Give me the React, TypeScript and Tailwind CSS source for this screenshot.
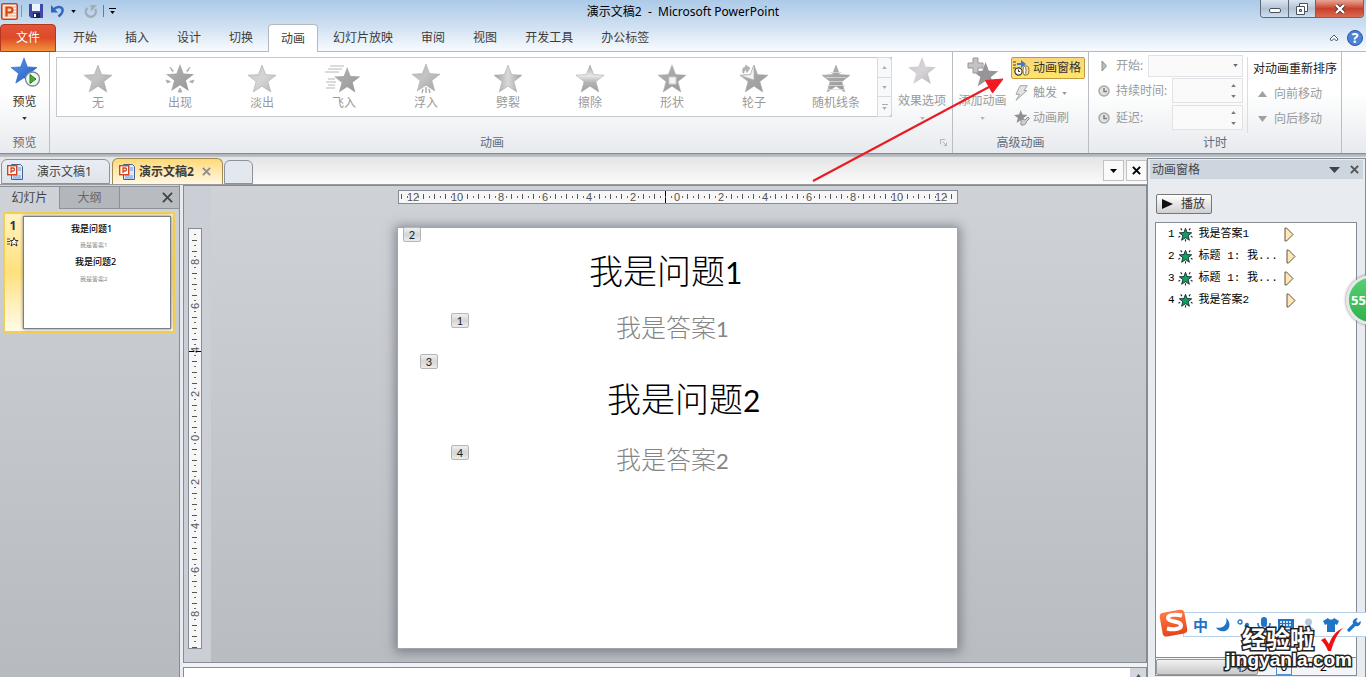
import type { ReactNode } from "react";

const STAR = "M14 0 L17.6 9.6 L28 10.2 L19.9 16.6 L22.8 27 L14 21.2 L5.2 27 L8.1 16.6 L0 10.2 L10.4 9.6 Z";

const menu = ["开始", "插入", "设计", "切换", "动画", "幻灯片放映", "审阅", "视图", "开发工具", "办公标签"];

const effects = [
  { name: "无", kind: "none" },
  { name: "出现", kind: "appear" },
  { name: "淡出", kind: "fade" },
  { name: "飞入", kind: "fly" },
  { name: "浮入", kind: "float" },
  { name: "劈裂", kind: "split" },
  { name: "擦除", kind: "wipe" },
  { name: "形状", kind: "shape" },
  { name: "轮子", kind: "wheel" },
  { name: "随机线条", kind: "bars" },
];

const timeline = [
  { id: 1, label: "我是答案1", shift: false },
  { id: 2, label: "标题 1: 我...", shift: true },
  { id: 3, label: "标题 1: 我...", shift: false },
  { id: 4, label: "我是答案2", shift: true },
];

function Caret({ className = "", up = false }: { className?: string; up?: boolean }) {
  return (
    <svg viewBox="0 0 6 4" className={`h-[3px] w-[5px] shrink-0 ${className}`}>
      <path d={up ? "M0 4 L3 0 L6 4 Z" : "M0 0 H6 L3 4 Z"} fill="currentColor" />
    </svg>
  );
}

function Defs() {
  return (
    <svg className="absolute size-0" aria-hidden="true">
      <defs>
        <linearGradient id="g-plain" x1="0" y1="0" x2="1" y2="1">
          <stop offset="0" stopColor="#b9b9b9" />
          <stop offset=".45" stopColor="#c4c4c4" />
          <stop offset="1" stopColor="#a2a2a2" />
        </linearGradient>
        <linearGradient id="g-dark" x1="0" y1="0" x2="1" y2="1">
          <stop offset="0" stopColor="#b4b2b4" />
          <stop offset="1" stopColor="#989698" />
        </linearGradient>
        <linearGradient id="g-light" x1="0" y1="0" x2="1" y2="1">
          <stop offset="0" stopColor="#c6c4c6" />
          <stop offset=".5" stopColor="#d6d4d6" />
          <stop offset="1" stopColor="#b8b6b8" />
        </linearGradient>
        <linearGradient id="g-split" x1="0" y1="0" x2="1" y2="0">
          <stop offset="0" stopColor="#a19fa1" />
          <stop offset=".5" stopColor="#dad9da" />
          <stop offset="1" stopColor="#a19fa1" />
        </linearGradient>
        <linearGradient id="g-wipe" x1="0" y1="0" x2="0" y2="1">
          <stop offset="0" stopColor="#a8a6a8" />
          <stop offset=".4" stopColor="#e8e8e8" />
          <stop offset=".65" stopColor="#b4b2b4" />
          <stop offset="1" stopColor="#a09ea0" />
        </linearGradient>
        <linearGradient id="g-blue" x1="0" y1="0" x2="1" y2="1">
          <stop offset="0" stopColor="#5b9bf0" />
          <stop offset="1" stopColor="#1f57bd" />
        </linearGradient>
        <linearGradient id="g-orange" x1="0" y1="0" x2="0" y2="1">
          <stop offset="0" stopColor="#ff7a45" />
          <stop offset="1" stopColor="#e6451b" />
        </linearGradient>
      </defs>
    </svg>
  );
}

function EffectIcon({ kind }: { kind: string }) {
  const fills: Record<string, string> = {
    none: "url(#g-plain)",
    fade: "url(#g-light)",
    split: "url(#g-split)",
    wipe: "url(#g-wipe)",
  };
  return (
    <svg viewBox="-6 -2 40 32" className="h-8 w-10">
      {kind === "float" ? (
        <path d={STAR} fill="url(#g-plain)" stroke="#b0aeb0" strokeWidth=".6" transform="translate(0 -1)" />
      ) : kind === "fly" || kind === "appear" ? (
        <path d={STAR} fill="url(#g-dark)" transform={kind === "fly" ? "translate(4 2) scale(.94)" : "translate(0 -1)"} />
      ) : (
        <path d={STAR} fill={fills[kind] ?? "url(#g-dark)"} stroke="#adabad" strokeWidth=".6" />
      )}
      {kind === "appear" && (
        <path d="M4 2l3.500 4-1 .8zM24 2l-3.500 4 1 .8zM0 15l4.500 1.500-3 1.500zM28 15l-4.500 1.500 3 1.500zM12 27l2-4 2 4z" fill="#a8a8a8" stroke="#b4b4b4" />
      )}
      {kind === "fly" && (
        <path d="M0 1h14M-2 4h14M-5 7h14M-2 14h7M-4 17h10M-2 20h7M-4 23h9" stroke="#b8b8b8" strokeWidth="1.2" />
      )}
      {kind === "float" && <path d="M11 24l-1 4M14 22v6M17 24l1 4" stroke="#a8a8a8" strokeWidth="1.4" />}
      {kind === "shape" && <path d="M11 12h7v7h-7z" fill="#f4f4f4" stroke="#cfcfcf" />}
      {kind === "wheel" && (
        <>
          <path d="M14 0v15L0 10.5l10.4-.9z" fill="#f5f5f5" stroke="#b0b0b0" strokeWidth=".7" />
          <path d="M3 8c-1-4 0-6 3-6l-.5-2L10 3 7 7.500 6 5C4.500 5 4 6 4 8z" fill="#b4b4b4" stroke="#999" strokeWidth=".5" />
        </>
      )}
      {kind === "bars" && (
        <path d="M8 7.5h12M4 12.500h20M7 16.500h14M5 20.500h18M5 24.500h18" stroke="#dcdcdc" strokeWidth=".8" />
      )}
    </svg>
  );
}

function PptIcon() {
  return (
    <svg viewBox="0 0 17 17" className="size-[17px] shrink-0">
      <rect x=".8" y=".8" width="15.4" height="15.4" rx="1.5" fill="#fff4ec" stroke="#cf3f17" strokeWidth="1.6" />
      <path d="M3 3h8v11H3z" fill="#fbd3bb" />
      <path d="M11 4h4M11 7h4M11 10h4M11 13h4" stroke="#f19a70" />
      <path d="M5.5 13.500V4.500H9a2.300 2.300 0 0 1 0 5H6" fill="none" stroke="#cf4a12" strokeWidth="2.200" />
    </svg>
  );
}

function DocIcon() {
  return (
    <svg viewBox="0 0 16 16" className="size-4 shrink-0">
      <path d="M4.500.5h9l2 2v13h-11z" fill="#dce9fb" stroke="#48658e" />
      <path d="M11 4h3M11 6h3M6 12h8M6 14h8" stroke="#6d9be0" />
      <rect x=".7" y="1.700" width="9" height="9" fill="#fff" stroke="#d1431a" strokeWidth="1.400" />
      <path d="M4 9V4h2a1.400 1.400 0 0 1 0 3H4" fill="none" stroke="#d1431a" strokeWidth="1.300" />
    </svg>
  );
}

function Cross({ className = "" }: { className?: string }) {
  return (
    <svg viewBox="0 0 10 10" className={`size-[9px] ${className}`}>
      <path d="M1 1l8 8M9 1L1 9" stroke="currentColor" strokeWidth="2.2" />
    </svg>
  );
}

function TitleBar() {
  return (
    <div className="relative flex h-6 items-start justify-between pl-px">
      <div className="flex h-[22px] items-center">
        <PptIcon />
        <span className="mx-[3px] h-3 w-px bg-[#8796a8]" />
        <button aria-label="保存" className="ml-1">
          <svg viewBox="0 0 14 14" className="size-[14px]">
            <path d="M0 0h14v14H2l-2-2z" fill="#3f4aa8" />
            <path d="M3 0h8v7H3z" fill="#eef4ff" />
            <path d="M4 9h7v5H4z" fill="#1d2250" />
            <path d="M5 10h2v3H5z" fill="#fff" />
          </svg>
        </button>
        <button aria-label="撤消" className="ml-2">
          <svg viewBox="0 0 14 14" className="size-[14px]">
            <path d="M2.500 5.500C7 1 12.500 3 11.500 7.500c-.4 2-2 3.500-4 5" fill="none" stroke="#2f68c4" strokeWidth="2.400" />
            <path d="M0 1v7.500h7z" fill="#2f68c4" />
          </svg>
        </button>
        <Caret className="ml-[6px] text-black" />
        <button aria-label="恢复" className="ml-2">
          <svg viewBox="0 0 14 14" className="size-[14px]">
            <path d="M3.500 4a5 5 0 1 0 7.500 1" fill="none" stroke="#a6acb2" strokeWidth="2.400" />
            <path d="M6.500 1H13L7 7.500z" fill="#a6acb2" />
          </svg>
        </button>
        <span className="mx-[5px] h-3 w-px bg-[#6d7b8c]" />
        <button aria-label="自定义快速访问工具栏" className="flex flex-col items-center gap-[2px]">
          <span className="h-px w-[7px] bg-black" />
          <Caret className="text-black" />
        </button>
      </div>
      <h1 className="absolute inset-x-0 top-0 text-center leading-6 whitespace-pre text-black">演示文稿2  -  Microsoft PowerPoint</h1>
      <div className="relative mr-[2px] flex h-[18px] overflow-hidden rounded-b border border-t-0 border-[#5c6a7b]">
        <button aria-label="最小化" className="grid w-7 place-items-center border-r border-[#5c6a7b] bg-linear-to-b from-[#dbe5f0] via-[#b3c3d5] to-[#d0dfee]">
          <span className="mt-1 h-[5px] w-3 rounded-xs border border-[#4a5260] bg-white" />
        </button>
        <button aria-label="还原" className="grid w-[27px] place-items-center border-r border-[#5c6a7b] bg-linear-to-b from-[#dbe5f0] via-[#b3c3d5] to-[#d0dfee]">
          <svg viewBox="0 0 12 12" className="size-3">
            <path d="M3.500.5h8v8h-8z" fill="#fff" stroke="#4a5260" />
            <path d="M.5 3.500h8v8h-8z" fill="#fff" stroke="#4a5260" />
            <path d="M3.500 6.500h2v2h-2z" fill="#b3c3d5" stroke="#4a5260" />
          </svg>
        </button>
        <button aria-label="关闭" className="grid w-[47px] place-items-center bg-linear-to-b from-[#e8a594] via-[#c8402a] to-[#d9694f]">
          <svg viewBox="0 0 12 10" className="h-[10px] w-3">
            <path d="M2 1l8 8M10 1L2 9" stroke="#4b3034" strokeWidth="4" />
            <path d="M2 1l8 8M10 1L2 9" stroke="#fff" strokeWidth="2.400" />
          </svg>
        </button>
      </div>
    </div>
  );
}

function MenuBar() {
  return (
    <nav className="flex h-7 items-stretch border-b border-[#b3b9c1] text-[#3b3b3b]">
      <a href="#file" className="mr-[3px] -mb-px flex w-14 items-center justify-center rounded-t border border-[#b5361a] bg-linear-to-b from-[#e2553a] via-[#dd4a26] to-[#f3903f] text-white">
        文件
      </a>
      {menu.map((m) => (
        <a
          key={m}
          href={`#${m}`}
          className={
            m === "动画"
              ? "mx-px -mb-px flex items-center rounded-t border border-b-0 border-[#b3b9c1] bg-white px-3"
              : "flex items-center px-[14px]"
          }
        >
          {m}
        </a>
      ))}
      <div className="ml-auto flex items-center gap-2 pr-[3px]">
        <button aria-label="功能区最小化">
          <svg viewBox="0 0 10 8" className="h-2 w-[10px]">
            <path d="M1 5l4-4 4 4-1.500 2L5 4.500 2.500 7z" fill="#fff" stroke="#4a5568" />
          </svg>
        </button>
        <button aria-label="帮助" className="size-4 rounded-full border border-[#2a56a5] bg-[#4b82d6] text-center text-sm leading-[14px] font-bold text-white">
          ?
        </button>
      </div>
    </nav>
  );
}

function Group({ title, className = "", children }: { title: string; className?: string; children: ReactNode }) {
  return (
    <section className={`relative flex flex-col border-r border-[#b9bec5] ${className}`}>
      <div className="flex min-h-0 flex-1 pt-[5px]">{children}</div>
      <h2 className="h-5 text-center leading-5 text-[#5f6b7c]">{title}</h2>
    </section>
  );
}

function Clock() {
  return (
    <svg viewBox="0 0 12 12" className="size-3 shrink-0">
      <circle cx="6" cy="6" r="5" fill="#e2e2e2" stroke="#a8a8a8" strokeWidth="1.500" />
      <path d="M6 3v3.500h3" fill="none" stroke="#7d7d7d" strokeWidth="1.500" />
    </svg>
  );
}

function Spinner({ id, label }: { id: string; label: string }) {
  return (
    <div className="flex h-[25px] items-center">
      <Clock />
      <label htmlFor={id} className="ml-[6px]">{label}</label>
      <div className="ml-auto flex h-full w-[71px] items-center border border-[#e0e2e6] bg-[#fafafa]">
        <input id={id} disabled className="h-full min-w-0 flex-1" />
        <div className="flex w-[17px] flex-col items-center gap-2 text-[#777]">
          <Caret up />
          <Caret />
        </div>
      </div>
    </div>
  );
}

function Ribbon() {
  return (
    <div className="flex h-[102px] border-b border-[#868c95] bg-linear-to-b from-white from-40% to-[#e7eaee] text-[#9a9a9a]">
      <Group title="预览" className="w-[50px] shrink-0">
        <button className="flex w-full flex-col items-center text-[#333]">
          <svg viewBox="0 0 30 32" className="h-8 w-[30px]">
            <path d={STAR} fill="url(#g-blue)" stroke="#2b62c0" strokeWidth=".7" transform="translate(1 1) scale(.93)" />
            <circle cx="22.500" cy="22" r="7" fill="#f3f7f4" stroke="#7b8b96" strokeWidth="1.300" />
            <path d="M20 17.500l6 4.500-6 4.500z" fill="#4ab02c" stroke="#2d7c1b" />
          </svg>
          <span className="mt-[3px] leading-5">预览</span>
          <Caret className="mt-[5px]" />
        </button>
      </Group>

      <Group title="动画" className="min-w-0 flex-1 pl-[6px] [&>h2]:pr-6">
        <div className="flex h-[60px] min-w-0 flex-1 border border-[#c5c9ce] bg-white">
          {effects.map((e) => (
            <button key={e.name} className="flex min-w-0 flex-1 flex-col items-center pt-[5px]">
              <EffectIcon kind={e.kind} />
              <span className="-mt-px leading-[18px] whitespace-nowrap">{e.name}</span>
            </button>
          ))}
          <div className="-my-px -mr-px flex w-[15px] flex-col divide-y divide-[#d8dade] rounded-r border border-[#d8dade] bg-[#f8f9fa] text-[#adadad]">
            <button aria-label="上一行" className="grid flex-1 place-items-center"><Caret up /></button>
            <button aria-label="下一行" className="grid flex-1 place-items-center"><Caret /></button>
            <button aria-label="其他" className="flex flex-1 flex-col items-center justify-center gap-[2px]">
              <span className="h-px w-[6px] bg-[#adadad]" />
              <Caret />
            </button>
          </div>
        </div>
        <button className="flex w-[60px] shrink-0 flex-col items-center">
          <svg viewBox="0 0 28 28" className="size-7">
            <path d={STAR} fill="url(#g-light)" />
          </svg>
          <span className="mt-[6px] leading-5">效果选项</span>
          <Caret className="mt-[6px] text-[#b5b5b5]" />
        </button>
        <svg viewBox="0 0 8 8" className="absolute right-[5px] bottom-[7px] size-[7px]">
          <path d="M.5 6V.5H6M3 3l4 4M7.500 4v3.500H4" fill="none" stroke="#a5abb3" />
        </svg>
      </Group>

      <Group title="高级动画" className="w-[136px] shrink-0">
        <button className="flex w-[58px] flex-col items-center pl-px">
          <svg viewBox="0 0 32 30" className="h-[30px] w-8">
            <path d={STAR} fill="#989598" transform="translate(6 5) scale(.9)" />
            <path d="M6 1h5v5h5v5h-5v5H6v-5H1V6h5z" fill="#c4c2c4" stroke="#999" />
          </svg>
          <span className="mt-1 leading-5">添加动画</span>
          <Caret className="mt-[6px] text-[#b5b5b5]" />
        </button>
        <div className="flex flex-col gap-[3px]">
          <button className="flex h-[22px] w-[74px] items-center gap-[3px] rounded-xs border border-[#c09a3e] bg-linear-to-b from-[#f9d77a] to-[#ffe56a] pl-px whitespace-nowrap text-[#333]">
            <svg viewBox="0 0 17 16" className="h-4 w-[17px] shrink-0">
              <path d="M0 2h3M0 5h3M0 8h3" stroke="#444" />
              <path d="M4 3h4V0l5 4-5 4V5H4z" fill="#3d78d8" />
              <circle cx="5.500" cy="11.500" r="3.600" fill="#fff" stroke="#333" strokeWidth="1.200" />
              <path d="M5.500 9.500v2h1.500" fill="none" stroke="#333" />
              <path d="M11 6h3a2 4.500 0 0 1 0 9h-3z" fill="#f6dc99" stroke="#8a7445" />
              <ellipse cx="11.500" cy="10.500" rx="1.500" ry="4" fill="#fff" stroke="#8a7445" />
            </svg>
            动画窗格
          </button>
          <button className="flex h-[22px] items-center gap-[5px] pl-1">
            <svg viewBox="0 0 13 16" className="h-4 w-[13px]">
              <path d="M5 .7h7.300L9 5.500h3L1 15.300l3.500-6H1z" fill="#e3e3e3" stroke="#a5a5a5" />
            </svg>
            触发
            <Caret />
          </button>
          <button className="flex h-[22px] items-center gap-[3px] pl-[3px]">
            <svg viewBox="0 0 16 16" className="size-4">
              <path d={STAR} fill="#908e90" transform="scale(.48)" />
              <path d="M7 9l4 1 3-3 1.500 1.500-3 3c0 3-3 4-5.500 3.500z" fill="#cfcfcf" stroke="#8e8e8e" />
            </svg>
            动画刷
          </button>
        </div>
      </Group>

      <Group title="计时" className="w-[253px] shrink-0">
        <div className="-mt-[2px] ml-[9px] flex w-[145px] flex-col gap-px">
          <div className="flex h-[22px] items-center">
            <svg viewBox="0 0 12 12" className="size-3"><path d="M4 1l4.500 5L4 11z" fill="#bdbdbd" stroke="#8d8d8d" /></svg>
            <label htmlFor="start" className="ml-[6px]">开始:</label>
            <div className="relative ml-auto h-full w-[95px]">
              <select id="start" disabled className="size-full appearance-none border border-[#e0e2e6] bg-[#fafafa]" />
              <Caret className="absolute top-[9px] right-[5px] text-[#666]" />
            </div>
          </div>
          <Spinner id="duration" label="持续时间:" />
          <div className="pt-px"><Spinner id="delay" label="延迟:" /></div>
        </div>
        <div className="ml-1 flex flex-1 flex-col border-l border-[#dadde1] pl-[5px] whitespace-nowrap">
          <span className="leading-6 text-[#222]">对动画重新排序</span>
          <button className="flex items-center gap-[7px] pl-[5px] leading-[25px]">
            <svg viewBox="0 0 9 6" className="h-[6px] w-[9px]"><path d="M0 6L4.500 0 9 6z" fill="#a0a0a0" /></svg>
            向前移动
          </button>
          <button className="flex items-center gap-[7px] pl-[5px] leading-[25px]">
            <svg viewBox="0 0 9 6" className="h-[6px] w-[9px]"><path d="M0 0h9L4.500 6z" fill="#a0a0a0" /></svg>
            向后移动
          </button>
        </div>
      </Group>
      <div className="w-6 shrink-0" />
    </div>
  );
}

function DocTabs() {
  return (
    <div className="flex h-7 shrink-0 items-end border-b border-[#9b9b9b] bg-linear-to-b from-[#e4e4e4] to-[#fbfbfb] pl-px">
      <button className="flex h-[25px] w-[109px] items-center gap-[14px] rounded-t-md border border-[#8b929b] bg-linear-to-b from-[#e9edf3] to-[#dfe4ec] pl-[5px] text-[#444]">
        <DocIcon />
        演示文稿1
      </button>
      <div className="ml-[2px] flex h-[26px] w-[111px] items-center rounded-t-md border border-b-0 border-[#a08a52] bg-linear-to-b from-[#ffd975] to-[#fff8e4] pl-[6px]">
        <DocIcon />
        <span className="ml-1 font-bold text-[#3a3a3a]">演示文稿2</span>
        <button aria-label="关闭文稿" className="ml-2"><Cross className="text-[#8e8e8e]" /></button>
      </div>
      <button aria-label="新建" className="ml-px h-6 w-[29px] rounded-t-md border border-[#8b929b] bg-[#e3e8ef]" />
      <div className="mb-[3px] ml-auto flex gap-[2px]">
        <button aria-label="文稿列表" className="grid size-[21px] place-items-center border border-[#c2c2c2] bg-[#fafafa] text-black">
          <svg viewBox="0 0 7 4" className="h-1 w-[7px]"><path d="M0 0h7L3.500 4z" fill="currentColor" /></svg>
        </button>
        <button aria-label="关闭" className="grid size-[21px] place-items-center border border-[#c2c2c2] bg-[#fafafa] text-black">
          <Cross />
        </button>
      </div>
    </div>
  );
}

function Outline() {
  return (
    <aside className="flex w-[180px] shrink-0 flex-col border-r border-[#868c95] bg-linear-to-b from-[#cfd2d7] to-[#b7babf] pt-px">
      <div className="flex h-[23px] border-t border-[#8b929b] text-[#444]">
        <button className="w-[59px]">幻灯片</button>
        <button className="w-[61px] border border-t-0 border-[#8b929b] bg-[#b3b7bc] text-[#666]">大纲</button>
        <div className="flex flex-1 items-center justify-end border-b border-[#8b929b] bg-[#b8bcc1] pr-[6px]">
          <button aria-label="关闭窗格">
            <svg viewBox="0 0 12 12" className="size-[11px]"><path d="M1 1l10 10M11 1L1 11" stroke="#444" strokeWidth="2" /></svg>
          </button>
        </div>
      </div>
      <div className="mt-[3px] mr-1 ml-[3px] flex rounded-xs border-2 border-[#f2cf52] bg-linear-to-b from-[#fff3c0] via-[#ffe07c] to-[#fffbe8] py-[2px] pr-[2px]">
        <div className="flex w-[18px] flex-col items-center pt-[2px] pr-[2px]">
          <span className="leading-4 font-bold text-[#333]">1</span>
          <svg viewBox="0 0 12 10" className="mt-[3px] h-[10px] w-3">
            <path d="M7 .5l1.300 3H11L9 5.500 10 9 7 7 4 9l1-3.500L3.500 3.500H6z" fill="#fff" stroke="#222" strokeWidth=".9" />
            <path d="M0 2h3M0 4.500h3M0 7h3" stroke="#222" strokeWidth=".8" />
          </svg>
        </div>
        <div className="relative h-[113px] flex-1 border border-[#7a7f87] bg-white text-center whitespace-nowrap text-black shadow-[0_0_3px_#777]">
          <p className="absolute top-[6px] left-[47px] text-[9px] leading-3 font-medium">我是问题1</p>
          <p className="absolute top-[22px] left-[56px] text-[6px] leading-3 text-[#888]">我是答案1</p>
          <p className="absolute top-[39px] left-[51px] text-[9px] leading-3 font-medium">我是问题2</p>
          <p className="absolute top-[56px] left-[56px] text-[6px] leading-3 text-[#888]">我是答案2</p>
        </div>
      </div>
    </aside>
  );
}

// One unit is 22px: a numeral every second unit, a stroke on halves, a dot on quarters.
function Ruler({ length, origin, marker, vertical = false }: { length: number; origin: number; marker: number; vertical?: boolean }) {
  const marks: ReactNode[] = [];
  for (let k = -60; k <= 60; k++) {
    const x = origin + k * 5.5;
    if (x < 2 || x > length - 2) continue;
    if (k % 8 === 0) {
      marks.push(
        <text key={k} x={x} y="11" textAnchor="middle" fontSize="11" fill="#555">
          {Math.abs(k / 4)}
        </text>,
      );
    } else if (k % 2 === 0) {
      marks.push(<path key={k} d={`M${Math.round(x) - 0.5} 4v5`} stroke="#555" />);
    } else {
      marks.push(<path key={k} d={`M${Math.round(x) - 0.5} 6v2`} stroke="#666" />);
    }
  }
  return (
    <svg
      viewBox={vertical ? `0 0 14 ${length}` : `0 0 ${length} 14`}
      width={vertical ? 14 : length}
      height={vertical ? length : 14}
      className="shrink-0 [font-family:'Liberation_Sans',sans-serif]"
    >
      <g transform={vertical ? `translate(0 ${length}) rotate(-90)` : undefined}>
        <rect x=".5" y=".5" width={length - 1} height="13" fill="#f7f7f7" stroke="#868c95" />
        {marks}
        <path d={`M${marker}.5 1v12`} stroke="#000" strokeDasharray="5 2" />
      </g>
    </svg>
  );
}

function OrderTag({ n, className }: { n: number; className: string }) {
  return (
    <span className={`absolute h-[15px] w-[18px] rounded-xs border border-[#b5b5b5] bg-linear-to-b from-[#f0f0f0] via-[#d6d6d6] to-[#ececec] text-center text-[11px] leading-[13px] text-[#222] ${className}`}>
      {n}
    </span>
  );
}

function Canvas() {
  return (
    <main className="ml-[3px] flex min-w-0 flex-1 flex-col bg-[#f0f2f5]">
      <div className="flex min-h-0 flex-1 border border-[#868c95] bg-linear-to-b from-[#cfd2d7] to-[#b9bcc1]">
        <div className="w-[27px] shrink-0 bg-[#cbcfd5] pt-[42px] pl-1">
          <Ruler vertical length={421} origin={211} marker={297} />
        </div>
        <div className="flex min-w-0 flex-1 flex-col items-center pt-1 pr-[2px]">
          <Ruler length={560} origin={279} marker={267} />
          <div className="relative mt-[23px] h-[422px] w-[561px] border border-[#a2a6ac] bg-white whitespace-nowrap shadow-[0_1px_10px_2px_rgba(60,65,75,0.5)] [font-family:Lato,'Noto_Sans_CJK_SC',sans-serif]">
            <p className="absolute top-[18px] left-[191px] text-[34px] leading-[50px] font-light text-black">
              我是问题<span className="text-[30px] font-normal">1</span>
            </p>
            <p className="absolute top-[81px] left-[218px] text-[25px] leading-9 font-light text-[#858585]">
              我是答案<span className="text-[22px] font-normal">1</span>
            </p>
            <p className="absolute top-[146px] left-[209px] text-[34px] leading-[50px] font-light text-black">
              我是问题<span className="text-[30px] font-normal">2</span>
            </p>
            <p className="absolute top-[213px] left-[218px] text-[25px] leading-9 font-light text-[#858585]">
              我是答案<span className="text-[22px] font-normal">2</span>
            </p>
            <OrderTag n={2} className="-top-px left-[5px]" />
            <OrderTag n={1} className="top-[85px] left-[53px]" />
            <OrderTag n={3} className="top-[126px] left-[22px]" />
            <OrderTag n={4} className="top-[217px] left-[53px]" />
          </div>
        </div>
      </div>
      <div className="mt-1 flex h-[10px] shrink-0 justify-end border border-b-0 border-[#868c95] bg-white">
        <div className="grid w-4 place-items-end justify-center bg-[#d3d7dd] text-[#555]"><Caret up /></div>
      </div>
    </main>
  );
}

function AnimationPane() {
  return (
    <aside className="mt-px flex w-[219px] shrink-0 flex-col border border-b-0 border-[#868c95] bg-[#e8ebf0] px-[2px] pt-px">
      <div className="flex h-[19px] items-center bg-[#cdd5df] pr-1 pl-[2px] text-[#444]">
        <h2 className="flex-1">动画窗格</h2>
        <button aria-label="窗格选项" className="mr-[10px]">
          <svg viewBox="0 0 11 6" className="h-[6px] w-[11px]"><path d="M0 0h11L5.500 6z" fill="#444" /></svg>
        </button>
        <button aria-label="关闭动画窗格" className="text-[#555]"><Cross /></button>
      </div>
      <button className="mt-[15px] ml-[6px] flex h-5 w-14 items-center gap-2 rounded-xs border border-[#777] bg-linear-to-b from-white to-[#cfcfcf] pl-[5px] text-[#333]">
        <svg viewBox="0 0 11 10" className="h-[10px] w-[11px]"><path d="M0 0l11 5-11 5z" fill="#111" /></svg>
        播放
      </button>
      <div className="mt-2 mr-[6px] ml-[5px] flex min-h-0 flex-1 flex-col border border-[#868c95] bg-white">
        <ol className="flex-1 text-[11px] text-black [font-family:'Liberation_Mono','Noto_Sans_CJK_SC',monospace]">
          {timeline.map((t) => (
            <li key={t.id} className="flex h-[22px] items-center pl-3">
              <span>{t.id}</span>
              <svg viewBox="-3 -3 34 34" className="ml-[3px] size-[15px]">
                <path d={STAR} fill="#12a05c" stroke="#123" strokeWidth="2" />
                <path d="M3 0l3 4M25 0l-3 4M-2 20l4-2M30 20l-4-2M14 25v5" stroke="#222" strokeWidth="2.500" />
              </svg>
              <span className="ml-[6px] w-[84px] whitespace-pre">{t.label}</span>
              <svg viewBox="0 0 10 15" className={t.shift ? "ml-[3px] h-[15px] w-[10px]" : "ml-px h-[15px] w-[10px]"}>
                <path d="M1 1h1.500L9 7.500 2.500 14H1z" fill="#ffe6b3" stroke="#5e5648" />
              </svg>
            </li>
          ))}
        </ol>
        <div className="flex h-[18px] items-center border-t border-[#868c95] bg-[#f3f5f7] text-black">
          <div className="h-4 w-[102px] rounded-xs border border-[#9a9a9a] bg-linear-to-b from-[#f2f2f2] to-[#c9c9c9] pr-2 text-right leading-[14px]">秒</div>
          <span className="ml-[18px] w-4 border border-[#4a90d9] text-center leading-[14px]">0</span>
          <span className="ml-7">2</span>
        </div>
      </div>
      <div className="h-px" />
    </aside>
  );
}

function ImeBar() {
  return (
    <div className="absolute right-0 bottom-[40px] flex h-[25px] w-[183px] items-center justify-between border border-r-0 border-[#b9cfe6] bg-[#fdfeff] pr-1 pl-[9px] text-[#1f74c8]">
      <svg viewBox="0 0 30 30" className="absolute -top-[5px] -left-[25px] size-[30px]">
        <rect x="2" y="3" width="25" height="24" rx="4" fill="url(#g-orange)" transform="rotate(-10 15 15)" />
        <path d="M23 7.500c-5-1-14-1.500-14 2.500 0 4.500 13 2.500 13 7.500 0 4-8 4.500-14 3" fill="none" stroke="#fff" strokeWidth="4" />
      </svg>
      <span className="text-[15px] leading-5 font-bold">中</span>
      <svg viewBox="0 0 14 14" className="size-[14px]"><path d="M10 0c2 6-3 11-10 9.500C3 15 13 15 13.500 7 13.500 4 12 1.500 10 0z" fill="currentColor" /></svg>
      <svg viewBox="0 0 12 12" className="size-3">
        <circle cx="3" cy="3" r="2" fill="none" stroke="currentColor" strokeWidth="1.300" />
        <path d="M8 5.500a2 2 0 1 1 3 2c0 2-1 3.500-3 4 1-1 1.300-2 1-3a2 2 0 0 1-1-3z" fill="currentColor" />
      </svg>
      <svg viewBox="0 0 14 16" className="h-4 w-[14px]">
        <rect x="4" y="0" width="6" height="10" rx="3" fill="currentColor" />
        <path d="M1 6v1a6 5 0 0 0 12 0V6M7 12v3M3 15h8" fill="none" stroke="currentColor" strokeWidth="1.600" />
      </svg>
      <svg viewBox="0 0 16 12" className="h-3 w-4">
        <path d="M0 0h16v12H0z" fill="currentColor" />
        <path d="M2 3h12M2 6h12" stroke="#fff" strokeWidth="1.500" strokeDasharray="2 1" />
        <path d="M4 9.500h8" stroke="#fff" strokeWidth="1.500" />
      </svg>
      <svg viewBox="0 0 14 14" className="size-[14px] text-[#b9c5dc]">
        <circle cx="6.500" cy="4" r="3.500" fill="currentColor" />
        <path d="M0 14c0-7 13-7 13 0z" fill="currentColor" />
      </svg>
      <svg viewBox="0 0 16 14" className="h-[14px] w-4"><path d="M5 0c1 2 5 2 6 0l5 3-2 4-2-1v8H4V6L2 7 0 3z" fill="currentColor" /></svg>
      <svg viewBox="0 0 15 15" className="size-[15px]">
        <path d="M2 13l6.500-6.500" stroke="currentColor" strokeWidth="3.200" strokeLinecap="round" />
        <path d="M13.500 4L11 6 9 4l2-2.500A4 4 0 1 0 13.500 4z" fill="currentColor" />
      </svg>
    </div>
  );
}

function Watermark() {
  return (
    <div className="absolute right-[14px] bottom-[9px] flex flex-col items-end text-white [-webkit-text-stroke:3px_#222] [paint-order:stroke_fill] [font-family:'Liberation_Sans','Noto_Sans_CJK_SC',sans-serif]">
      <div className="flex items-end gap-[6px]">
        <span className="text-2xl leading-6 font-bold">经验啦</span>
        <svg viewBox="0 0 24 24" className="mr-2 h-6 w-6">
          <path d="M1 12l4-2 4 6C12 8 16 3 23 0c-6 6-9 13-12 23H8C6 18 4 15 1 12z" fill="#f01010" />
        </svg>
      </div>
      <span className="text-[19px] leading-4 font-bold">jingyanla.com</span>
    </div>
  );
}

export default function App() {
  return (
    <div className="relative flex h-screen flex-col overflow-hidden bg-[#e8ebf0] text-xs [font-family:'Noto_Sans','Noto_Sans_CJK_SC',sans-serif]">
      <Defs />
      <header className="shrink-0">
        <div className="bg-linear-to-b from-[#accae8] via-[#cfe0f1] to-[#fafcfe]">
          <TitleBar />
          <MenuBar />
        </div>
        <Ribbon />
        <div className="h-[3px] bg-linear-to-b from-[#a9aeb5] to-[#c5c8cc]" />
      </header>
      <div className="flex min-h-0 flex-1">
        <div className="flex min-w-0 flex-1 flex-col">
          <DocTabs />
          <div className="flex min-h-0 flex-1">
            <Outline />
            <Canvas />
          </div>
        </div>
        <AnimationPane />
      </div>

      <svg viewBox="0 0 194 106" className="absolute top-[77px] right-[361px] h-[106px] w-[194px]">
        <path d="M2 104L178 10" stroke="#e81b22" strokeWidth="2" />
        <path d="M192 2L174.500 3.500 181.500 16z" fill="#f01b22" stroke="#f01b22" />
      </svg>
      <div className="absolute top-[275px] -right-[30px] size-[50px] rounded-full border-[3px] border-[#e4e6e8] bg-linear-to-b from-[#56cf70] to-[#2fb24e] pl-[2px] text-[13px] leading-[44px] font-bold text-white shadow-[0_0_3px_#666]">
        55
      </div>
      <ImeBar />
      <Watermark />
    </div>
  );
}
